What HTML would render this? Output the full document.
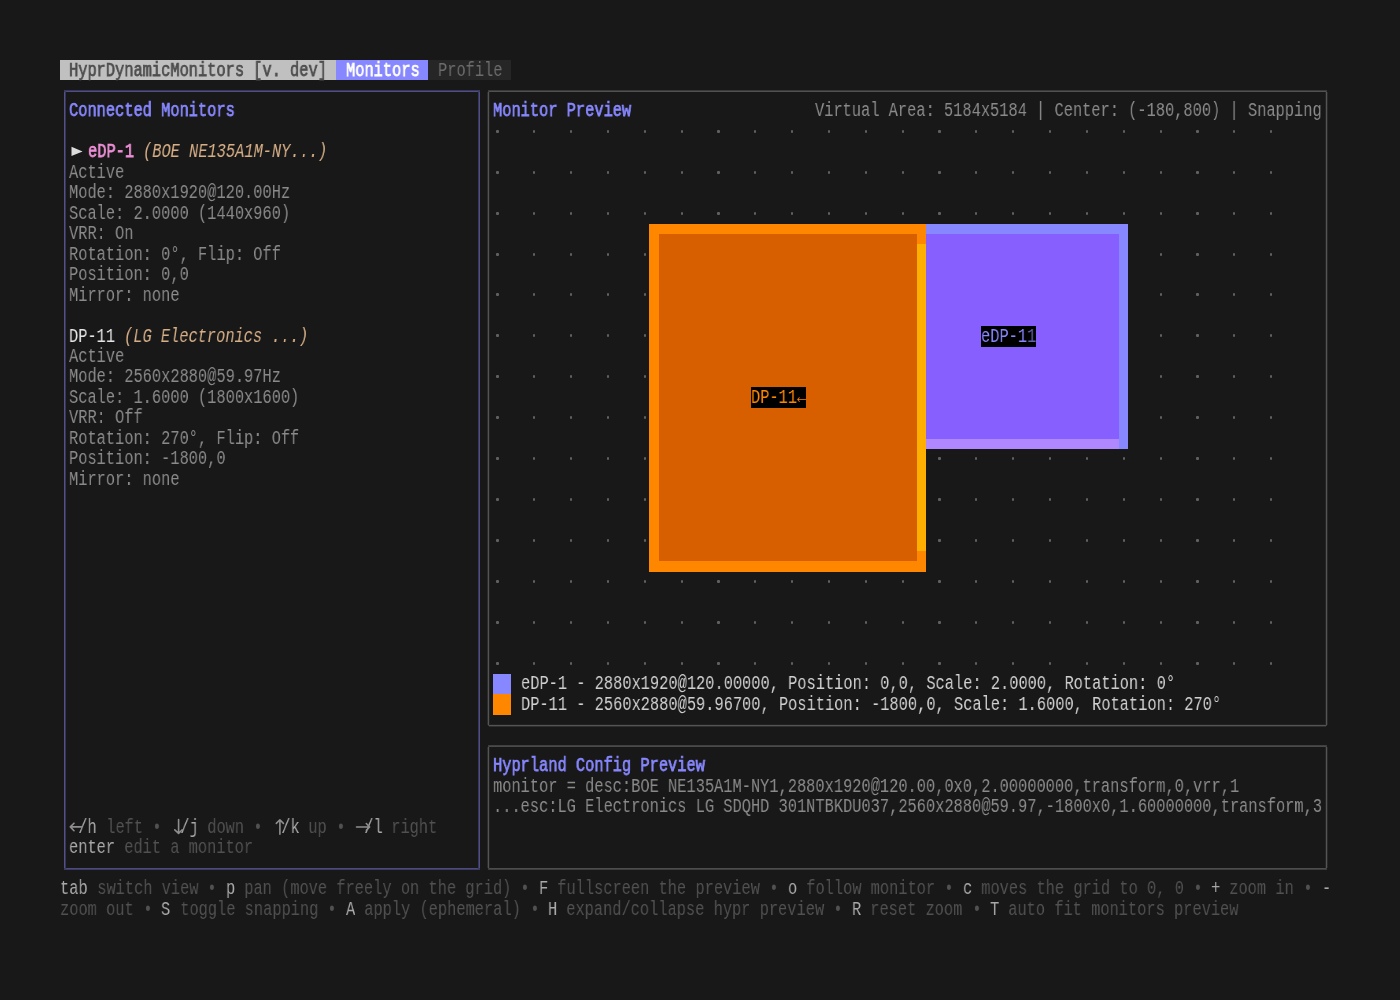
<!DOCTYPE html><html><head><meta charset="utf-8"><style>
html,body{margin:0;padding:0;width:1400px;height:1000px;overflow:hidden;background:#181818;}
body>div{position:absolute;}
.t{white-space:pre;font-family:"Liberation Mono",monospace;font-size:19.5px;line-height:20.465px;height:20.465px;transform-origin:0 0;transform:scaleX(0.78718);will-change:transform;}
.bx{border:1.5px solid;border-radius:2px;box-sizing:border-box;}
</style></head><body>
<div style="left:60.00px;top:60.00px;width:276.30px;height:20.47px;background:#c0c0c0;"></div>
<div style="left:336.30px;top:60.00px;width:92.10px;height:20.47px;background:#8787ff;"></div>
<div style="left:428.40px;top:60.00px;width:82.89px;height:20.47px;background:#262626;"></div>
<div class="t" style="left:69.21px;top:60.50px;color:#4e4e4e;-webkit-text-stroke:0.75px;">HyprDynamicMonitors [v. dev]</div>
<div class="t" style="left:345.51px;top:60.50px;color:#ffffff;-webkit-text-stroke:0.75px;">Monitors</div>
<div class="t" style="left:437.61px;top:60.50px;color:#6c6c6c;">Profile</div>
<div style="left:65.76px;top:90.00px;width:412.45px;height:1.00px;background:#393759;"></div>
<div style="left:65.76px;top:91.00px;width:412.45px;height:1.00px;background:#504e88;"></div>
<div style="left:65.76px;top:868.00px;width:412.45px;height:1.00px;background:#4c4a80;"></div>
<div style="left:65.76px;top:869.00px;width:412.45px;height:1.00px;background:#3c3b61;"></div>
<div style="left:64.00px;top:92.20px;width:1.00px;height:775.67px;background:#53518d;"></div>
<div style="left:65.00px;top:92.20px;width:1.00px;height:775.67px;background:#363554;"></div>
<div style="left:478.00px;top:92.20px;width:1.00px;height:775.67px;background:#383758;"></div>
<div style="left:479.00px;top:92.20px;width:1.00px;height:775.67px;background:#504e89;"></div>
<div style="left:64.01px;top:90.45px;width:1.50px;height:1.50px;background:#3b3a5f;"></div>
<div style="left:478.46px;top:90.45px;width:1.50px;height:1.50px;background:#3b3a5f;"></div>
<div style="left:64.01px;top:868.12px;width:1.50px;height:1.50px;background:#3b3a5f;"></div>
<div style="left:478.46px;top:868.12px;width:1.50px;height:1.50px;background:#3b3a5f;"></div>
<div style="left:489.42px;top:90.00px;width:836.11px;height:1.00px;background:#393939;"></div>
<div style="left:489.42px;top:91.00px;width:836.11px;height:1.00px;background:#515151;"></div>
<div style="left:489.42px;top:724.00px;width:836.11px;height:1.00px;background:#202020;"></div>
<div style="left:489.42px;top:725.00px;width:836.11px;height:1.00px;background:#545454;"></div>
<div style="left:489.42px;top:726.00px;width:836.11px;height:1.00px;background:#2e2e2e;"></div>
<div style="left:487.00px;top:92.20px;width:1.00px;height:632.41px;background:#2c2c2c;"></div>
<div style="left:488.00px;top:92.20px;width:1.00px;height:632.41px;background:#545454;"></div>
<div style="left:489.00px;top:92.20px;width:1.00px;height:632.41px;background:#222222;"></div>
<div style="left:1325.00px;top:92.20px;width:1.00px;height:632.41px;background:#252525;"></div>
<div style="left:1326.00px;top:92.20px;width:1.00px;height:632.41px;background:#545454;"></div>
<div style="left:1327.00px;top:92.20px;width:1.00px;height:632.41px;background:#292929;"></div>
<div style="left:487.67px;top:90.45px;width:1.50px;height:1.50px;background:#3c3c3c;"></div>
<div style="left:1325.78px;top:90.45px;width:1.50px;height:1.50px;background:#3c3c3c;"></div>
<div style="left:487.67px;top:724.86px;width:1.50px;height:1.50px;background:#3c3c3c;"></div>
<div style="left:1325.78px;top:724.86px;width:1.50px;height:1.50px;background:#3c3c3c;"></div>
<div style="left:489.42px;top:745.00px;width:836.11px;height:1.00px;background:#404040;"></div>
<div style="left:489.42px;top:746.00px;width:836.11px;height:1.00px;background:#4a4a4a;"></div>
<div style="left:489.42px;top:868.00px;width:836.11px;height:1.00px;background:#4d4d4d;"></div>
<div style="left:489.42px;top:869.00px;width:836.11px;height:1.00px;background:#3d3d3d;"></div>
<div style="left:487.00px;top:747.08px;width:1.00px;height:120.79px;background:#2c2c2c;"></div>
<div style="left:488.00px;top:747.08px;width:1.00px;height:120.79px;background:#545454;"></div>
<div style="left:489.00px;top:747.08px;width:1.00px;height:120.79px;background:#222222;"></div>
<div style="left:1325.00px;top:747.08px;width:1.00px;height:120.79px;background:#252525;"></div>
<div style="left:1326.00px;top:747.08px;width:1.00px;height:120.79px;background:#545454;"></div>
<div style="left:1327.00px;top:747.08px;width:1.00px;height:120.79px;background:#292929;"></div>
<div style="left:487.67px;top:745.33px;width:1.50px;height:1.50px;background:#3c3c3c;"></div>
<div style="left:1325.78px;top:745.33px;width:1.50px;height:1.50px;background:#3c3c3c;"></div>
<div style="left:487.67px;top:868.12px;width:1.50px;height:1.50px;background:#3c3c3c;"></div>
<div style="left:1325.78px;top:868.12px;width:1.50px;height:1.50px;background:#3c3c3c;"></div>
<div class="t" style="left:69.21px;top:101.43px;color:#8787ff;-webkit-text-stroke:0.75px;">Connected Monitors</div>
<div class="t" style="left:492.87px;top:101.43px;color:#8787ff;-webkit-text-stroke:0.75px;">Monitor Preview</div>
<div class="t" style="left:815.22px;top:101.43px;color:#8a8a8a;">Virtual Area: 5184x5184 | Center: (-180,800) | Snapping</div>
<svg style="position:absolute;left:0;top:0" width="100" height="200"><polygon points="71.5,146.8 82.6,151.4 71.5,156" fill="#dcdcdc"/></svg>
<div class="t" style="left:87.63px;top:142.36px;color:#ec8fd6;-webkit-text-stroke:0.75px;">eDP-1</div>
<div class="t" style="left:142.89px;top:142.36px;color:#d7af87;font-style:italic;">(BOE NE135A1M-NY...)</div>
<div class="t" style="left:69.21px;top:162.82px;color:#8a8a8a;">Active</div>
<div class="t" style="left:69.21px;top:183.29px;color:#8a8a8a;">Mode: 2880x1920@120.00Hz</div>
<div class="t" style="left:69.21px;top:203.75px;color:#8a8a8a;">Scale: 2.0000 (1440x960)</div>
<div class="t" style="left:69.21px;top:224.22px;color:#8a8a8a;">VRR: On</div>
<div class="t" style="left:69.21px;top:244.69px;color:#8a8a8a;">Rotation: 0°, Flip: Off</div>
<div class="t" style="left:69.21px;top:265.15px;color:#8a8a8a;">Position: 0,0</div>
<div class="t" style="left:69.21px;top:285.62px;color:#8a8a8a;">Mirror: none</div>
<div class="t" style="left:69.21px;top:326.55px;color:#e4e4e4;">DP-11</div>
<div class="t" style="left:124.47px;top:326.55px;color:#d7af87;font-style:italic;">(LG Electronics ...)</div>
<div class="t" style="left:69.21px;top:347.01px;color:#8a8a8a;">Active</div>
<div class="t" style="left:69.21px;top:367.48px;color:#8a8a8a;">Mode: 2560x2880@59.97Hz</div>
<div class="t" style="left:69.21px;top:387.94px;color:#8a8a8a;">Scale: 1.6000 (1800x1600)</div>
<div class="t" style="left:69.21px;top:408.40px;color:#8a8a8a;">VRR: Off</div>
<div class="t" style="left:69.21px;top:428.87px;color:#8a8a8a;">Rotation: 270°, Flip: Off</div>
<div class="t" style="left:69.21px;top:449.33px;color:#8a8a8a;">Position: -1800,0</div>
<div class="t" style="left:69.21px;top:469.80px;color:#8a8a8a;">Mirror: none</div>
<div class="t" style="left:69.21px;top:817.71px;color:#a8a8a8;"> /h</div>
<div class="t" style="left:96.84px;top:817.71px;color:#515151;"> left</div>
<div class="t" style="left:142.89px;top:817.71px;color:#515151;"> • </div>
<div class="t" style="left:170.52px;top:817.71px;color:#a8a8a8;"> /j</div>
<div class="t" style="left:198.15px;top:817.71px;color:#515151;"> down</div>
<div class="t" style="left:244.20px;top:817.71px;color:#515151;"> • </div>
<div class="t" style="left:271.83px;top:817.71px;color:#a8a8a8;"> /k</div>
<div class="t" style="left:299.46px;top:817.71px;color:#515151;"> up</div>
<div class="t" style="left:327.09px;top:817.71px;color:#515151;"> • </div>
<div class="t" style="left:354.72px;top:817.71px;color:#a8a8a8;"> /l</div>
<div class="t" style="left:382.35px;top:817.71px;color:#515151;"> right</div>
<svg style="position:absolute;left:0;top:0" width="400" height="900"><g fill="none" stroke="#8e8e8e" stroke-width="1.6" stroke-linecap="round" stroke-linejoin="round"><path d="M70.3,826.9 H81.5 M74,823.2 L70.3,826.9 L74,830.7"/><path d="M178.6,819.5 V833.3 M174.8,829.8 L178.6,833.4 L182.2,829.8"/><path d="M279.9,834.2 V819.8 M276.3,823.4 L279.9,819.8 L283.4,823.4"/><path d="M356.5,827 H367.5 M366.3,823.5 L369.6,827 L366.3,830.3"/></g></svg>
<div class="t" style="left:69.21px;top:838.17px;color:#a8a8a8;">enter</div>
<div class="t" style="left:115.26px;top:838.17px;color:#515151;"> edit a monitor</div>
<div style="left:496.38px;top:129.73px;width:2.20px;height:3.00px;background:#606060;border-radius:1px;"></div>
<div style="left:533.22px;top:129.73px;width:2.20px;height:3.00px;background:#606060;border-radius:1px;"></div>
<div style="left:570.06px;top:129.73px;width:2.20px;height:3.00px;background:#606060;border-radius:1px;"></div>
<div style="left:606.90px;top:129.73px;width:2.20px;height:3.00px;background:#606060;border-radius:1px;"></div>
<div style="left:643.74px;top:129.73px;width:2.20px;height:3.00px;background:#606060;border-radius:1px;"></div>
<div style="left:680.58px;top:129.73px;width:2.20px;height:3.00px;background:#606060;border-radius:1px;"></div>
<div style="left:717.42px;top:129.73px;width:2.20px;height:3.00px;background:#606060;border-radius:1px;"></div>
<div style="left:754.26px;top:129.73px;width:2.20px;height:3.00px;background:#606060;border-radius:1px;"></div>
<div style="left:791.10px;top:129.73px;width:2.20px;height:3.00px;background:#606060;border-radius:1px;"></div>
<div style="left:827.94px;top:129.73px;width:2.20px;height:3.00px;background:#606060;border-radius:1px;"></div>
<div style="left:864.78px;top:129.73px;width:2.20px;height:3.00px;background:#606060;border-radius:1px;"></div>
<div style="left:901.62px;top:129.73px;width:2.20px;height:3.00px;background:#606060;border-radius:1px;"></div>
<div style="left:938.46px;top:129.73px;width:2.20px;height:3.00px;background:#606060;border-radius:1px;"></div>
<div style="left:975.30px;top:129.73px;width:2.20px;height:3.00px;background:#606060;border-radius:1px;"></div>
<div style="left:1012.14px;top:129.73px;width:2.20px;height:3.00px;background:#606060;border-radius:1px;"></div>
<div style="left:1048.98px;top:129.73px;width:2.20px;height:3.00px;background:#606060;border-radius:1px;"></div>
<div style="left:1085.82px;top:129.73px;width:2.20px;height:3.00px;background:#606060;border-radius:1px;"></div>
<div style="left:1122.66px;top:129.73px;width:2.20px;height:3.00px;background:#606060;border-radius:1px;"></div>
<div style="left:1159.50px;top:129.73px;width:2.20px;height:3.00px;background:#606060;border-radius:1px;"></div>
<div style="left:1196.34px;top:129.73px;width:2.20px;height:3.00px;background:#606060;border-radius:1px;"></div>
<div style="left:1233.18px;top:129.73px;width:2.20px;height:3.00px;background:#606060;border-radius:1px;"></div>
<div style="left:1270.02px;top:129.73px;width:2.20px;height:3.00px;background:#606060;border-radius:1px;"></div>
<div style="left:496.38px;top:170.66px;width:2.20px;height:3.00px;background:#606060;border-radius:1px;"></div>
<div style="left:533.22px;top:170.66px;width:2.20px;height:3.00px;background:#606060;border-radius:1px;"></div>
<div style="left:570.06px;top:170.66px;width:2.20px;height:3.00px;background:#606060;border-radius:1px;"></div>
<div style="left:606.90px;top:170.66px;width:2.20px;height:3.00px;background:#606060;border-radius:1px;"></div>
<div style="left:643.74px;top:170.66px;width:2.20px;height:3.00px;background:#606060;border-radius:1px;"></div>
<div style="left:680.58px;top:170.66px;width:2.20px;height:3.00px;background:#606060;border-radius:1px;"></div>
<div style="left:717.42px;top:170.66px;width:2.20px;height:3.00px;background:#606060;border-radius:1px;"></div>
<div style="left:754.26px;top:170.66px;width:2.20px;height:3.00px;background:#606060;border-radius:1px;"></div>
<div style="left:791.10px;top:170.66px;width:2.20px;height:3.00px;background:#606060;border-radius:1px;"></div>
<div style="left:827.94px;top:170.66px;width:2.20px;height:3.00px;background:#606060;border-radius:1px;"></div>
<div style="left:864.78px;top:170.66px;width:2.20px;height:3.00px;background:#606060;border-radius:1px;"></div>
<div style="left:901.62px;top:170.66px;width:2.20px;height:3.00px;background:#606060;border-radius:1px;"></div>
<div style="left:938.46px;top:170.66px;width:2.20px;height:3.00px;background:#606060;border-radius:1px;"></div>
<div style="left:975.30px;top:170.66px;width:2.20px;height:3.00px;background:#606060;border-radius:1px;"></div>
<div style="left:1012.14px;top:170.66px;width:2.20px;height:3.00px;background:#606060;border-radius:1px;"></div>
<div style="left:1048.98px;top:170.66px;width:2.20px;height:3.00px;background:#606060;border-radius:1px;"></div>
<div style="left:1085.82px;top:170.66px;width:2.20px;height:3.00px;background:#606060;border-radius:1px;"></div>
<div style="left:1122.66px;top:170.66px;width:2.20px;height:3.00px;background:#606060;border-radius:1px;"></div>
<div style="left:1159.50px;top:170.66px;width:2.20px;height:3.00px;background:#606060;border-radius:1px;"></div>
<div style="left:1196.34px;top:170.66px;width:2.20px;height:3.00px;background:#606060;border-radius:1px;"></div>
<div style="left:1233.18px;top:170.66px;width:2.20px;height:3.00px;background:#606060;border-radius:1px;"></div>
<div style="left:1270.02px;top:170.66px;width:2.20px;height:3.00px;background:#606060;border-radius:1px;"></div>
<div style="left:496.38px;top:211.59px;width:2.20px;height:3.00px;background:#606060;border-radius:1px;"></div>
<div style="left:533.22px;top:211.59px;width:2.20px;height:3.00px;background:#606060;border-radius:1px;"></div>
<div style="left:570.06px;top:211.59px;width:2.20px;height:3.00px;background:#606060;border-radius:1px;"></div>
<div style="left:606.90px;top:211.59px;width:2.20px;height:3.00px;background:#606060;border-radius:1px;"></div>
<div style="left:643.74px;top:211.59px;width:2.20px;height:3.00px;background:#606060;border-radius:1px;"></div>
<div style="left:680.58px;top:211.59px;width:2.20px;height:3.00px;background:#606060;border-radius:1px;"></div>
<div style="left:717.42px;top:211.59px;width:2.20px;height:3.00px;background:#606060;border-radius:1px;"></div>
<div style="left:754.26px;top:211.59px;width:2.20px;height:3.00px;background:#606060;border-radius:1px;"></div>
<div style="left:791.10px;top:211.59px;width:2.20px;height:3.00px;background:#606060;border-radius:1px;"></div>
<div style="left:827.94px;top:211.59px;width:2.20px;height:3.00px;background:#606060;border-radius:1px;"></div>
<div style="left:864.78px;top:211.59px;width:2.20px;height:3.00px;background:#606060;border-radius:1px;"></div>
<div style="left:901.62px;top:211.59px;width:2.20px;height:3.00px;background:#606060;border-radius:1px;"></div>
<div style="left:938.46px;top:211.59px;width:2.20px;height:3.00px;background:#606060;border-radius:1px;"></div>
<div style="left:975.30px;top:211.59px;width:2.20px;height:3.00px;background:#606060;border-radius:1px;"></div>
<div style="left:1012.14px;top:211.59px;width:2.20px;height:3.00px;background:#606060;border-radius:1px;"></div>
<div style="left:1048.98px;top:211.59px;width:2.20px;height:3.00px;background:#606060;border-radius:1px;"></div>
<div style="left:1085.82px;top:211.59px;width:2.20px;height:3.00px;background:#606060;border-radius:1px;"></div>
<div style="left:1122.66px;top:211.59px;width:2.20px;height:3.00px;background:#606060;border-radius:1px;"></div>
<div style="left:1159.50px;top:211.59px;width:2.20px;height:3.00px;background:#606060;border-radius:1px;"></div>
<div style="left:1196.34px;top:211.59px;width:2.20px;height:3.00px;background:#606060;border-radius:1px;"></div>
<div style="left:1233.18px;top:211.59px;width:2.20px;height:3.00px;background:#606060;border-radius:1px;"></div>
<div style="left:1270.02px;top:211.59px;width:2.20px;height:3.00px;background:#606060;border-radius:1px;"></div>
<div style="left:496.38px;top:252.52px;width:2.20px;height:3.00px;background:#606060;border-radius:1px;"></div>
<div style="left:533.22px;top:252.52px;width:2.20px;height:3.00px;background:#606060;border-radius:1px;"></div>
<div style="left:570.06px;top:252.52px;width:2.20px;height:3.00px;background:#606060;border-radius:1px;"></div>
<div style="left:606.90px;top:252.52px;width:2.20px;height:3.00px;background:#606060;border-radius:1px;"></div>
<div style="left:643.74px;top:252.52px;width:2.20px;height:3.00px;background:#606060;border-radius:1px;"></div>
<div style="left:1159.50px;top:252.52px;width:2.20px;height:3.00px;background:#606060;border-radius:1px;"></div>
<div style="left:1196.34px;top:252.52px;width:2.20px;height:3.00px;background:#606060;border-radius:1px;"></div>
<div style="left:1233.18px;top:252.52px;width:2.20px;height:3.00px;background:#606060;border-radius:1px;"></div>
<div style="left:1270.02px;top:252.52px;width:2.20px;height:3.00px;background:#606060;border-radius:1px;"></div>
<div style="left:496.38px;top:293.45px;width:2.20px;height:3.00px;background:#606060;border-radius:1px;"></div>
<div style="left:533.22px;top:293.45px;width:2.20px;height:3.00px;background:#606060;border-radius:1px;"></div>
<div style="left:570.06px;top:293.45px;width:2.20px;height:3.00px;background:#606060;border-radius:1px;"></div>
<div style="left:606.90px;top:293.45px;width:2.20px;height:3.00px;background:#606060;border-radius:1px;"></div>
<div style="left:643.74px;top:293.45px;width:2.20px;height:3.00px;background:#606060;border-radius:1px;"></div>
<div style="left:1159.50px;top:293.45px;width:2.20px;height:3.00px;background:#606060;border-radius:1px;"></div>
<div style="left:1196.34px;top:293.45px;width:2.20px;height:3.00px;background:#606060;border-radius:1px;"></div>
<div style="left:1233.18px;top:293.45px;width:2.20px;height:3.00px;background:#606060;border-radius:1px;"></div>
<div style="left:1270.02px;top:293.45px;width:2.20px;height:3.00px;background:#606060;border-radius:1px;"></div>
<div style="left:496.38px;top:334.38px;width:2.20px;height:3.00px;background:#606060;border-radius:1px;"></div>
<div style="left:533.22px;top:334.38px;width:2.20px;height:3.00px;background:#606060;border-radius:1px;"></div>
<div style="left:570.06px;top:334.38px;width:2.20px;height:3.00px;background:#606060;border-radius:1px;"></div>
<div style="left:606.90px;top:334.38px;width:2.20px;height:3.00px;background:#606060;border-radius:1px;"></div>
<div style="left:643.74px;top:334.38px;width:2.20px;height:3.00px;background:#606060;border-radius:1px;"></div>
<div style="left:1159.50px;top:334.38px;width:2.20px;height:3.00px;background:#606060;border-radius:1px;"></div>
<div style="left:1196.34px;top:334.38px;width:2.20px;height:3.00px;background:#606060;border-radius:1px;"></div>
<div style="left:1233.18px;top:334.38px;width:2.20px;height:3.00px;background:#606060;border-radius:1px;"></div>
<div style="left:1270.02px;top:334.38px;width:2.20px;height:3.00px;background:#606060;border-radius:1px;"></div>
<div style="left:496.38px;top:375.31px;width:2.20px;height:3.00px;background:#606060;border-radius:1px;"></div>
<div style="left:533.22px;top:375.31px;width:2.20px;height:3.00px;background:#606060;border-radius:1px;"></div>
<div style="left:570.06px;top:375.31px;width:2.20px;height:3.00px;background:#606060;border-radius:1px;"></div>
<div style="left:606.90px;top:375.31px;width:2.20px;height:3.00px;background:#606060;border-radius:1px;"></div>
<div style="left:643.74px;top:375.31px;width:2.20px;height:3.00px;background:#606060;border-radius:1px;"></div>
<div style="left:1159.50px;top:375.31px;width:2.20px;height:3.00px;background:#606060;border-radius:1px;"></div>
<div style="left:1196.34px;top:375.31px;width:2.20px;height:3.00px;background:#606060;border-radius:1px;"></div>
<div style="left:1233.18px;top:375.31px;width:2.20px;height:3.00px;background:#606060;border-radius:1px;"></div>
<div style="left:1270.02px;top:375.31px;width:2.20px;height:3.00px;background:#606060;border-radius:1px;"></div>
<div style="left:496.38px;top:416.24px;width:2.20px;height:3.00px;background:#606060;border-radius:1px;"></div>
<div style="left:533.22px;top:416.24px;width:2.20px;height:3.00px;background:#606060;border-radius:1px;"></div>
<div style="left:570.06px;top:416.24px;width:2.20px;height:3.00px;background:#606060;border-radius:1px;"></div>
<div style="left:606.90px;top:416.24px;width:2.20px;height:3.00px;background:#606060;border-radius:1px;"></div>
<div style="left:643.74px;top:416.24px;width:2.20px;height:3.00px;background:#606060;border-radius:1px;"></div>
<div style="left:1159.50px;top:416.24px;width:2.20px;height:3.00px;background:#606060;border-radius:1px;"></div>
<div style="left:1196.34px;top:416.24px;width:2.20px;height:3.00px;background:#606060;border-radius:1px;"></div>
<div style="left:1233.18px;top:416.24px;width:2.20px;height:3.00px;background:#606060;border-radius:1px;"></div>
<div style="left:1270.02px;top:416.24px;width:2.20px;height:3.00px;background:#606060;border-radius:1px;"></div>
<div style="left:496.38px;top:457.17px;width:2.20px;height:3.00px;background:#606060;border-radius:1px;"></div>
<div style="left:533.22px;top:457.17px;width:2.20px;height:3.00px;background:#606060;border-radius:1px;"></div>
<div style="left:570.06px;top:457.17px;width:2.20px;height:3.00px;background:#606060;border-radius:1px;"></div>
<div style="left:606.90px;top:457.17px;width:2.20px;height:3.00px;background:#606060;border-radius:1px;"></div>
<div style="left:643.74px;top:457.17px;width:2.20px;height:3.00px;background:#606060;border-radius:1px;"></div>
<div style="left:938.46px;top:457.17px;width:2.20px;height:3.00px;background:#606060;border-radius:1px;"></div>
<div style="left:975.30px;top:457.17px;width:2.20px;height:3.00px;background:#606060;border-radius:1px;"></div>
<div style="left:1012.14px;top:457.17px;width:2.20px;height:3.00px;background:#606060;border-radius:1px;"></div>
<div style="left:1048.98px;top:457.17px;width:2.20px;height:3.00px;background:#606060;border-radius:1px;"></div>
<div style="left:1085.82px;top:457.17px;width:2.20px;height:3.00px;background:#606060;border-radius:1px;"></div>
<div style="left:1122.66px;top:457.17px;width:2.20px;height:3.00px;background:#606060;border-radius:1px;"></div>
<div style="left:1159.50px;top:457.17px;width:2.20px;height:3.00px;background:#606060;border-radius:1px;"></div>
<div style="left:1196.34px;top:457.17px;width:2.20px;height:3.00px;background:#606060;border-radius:1px;"></div>
<div style="left:1233.18px;top:457.17px;width:2.20px;height:3.00px;background:#606060;border-radius:1px;"></div>
<div style="left:1270.02px;top:457.17px;width:2.20px;height:3.00px;background:#606060;border-radius:1px;"></div>
<div style="left:496.38px;top:498.10px;width:2.20px;height:3.00px;background:#606060;border-radius:1px;"></div>
<div style="left:533.22px;top:498.10px;width:2.20px;height:3.00px;background:#606060;border-radius:1px;"></div>
<div style="left:570.06px;top:498.10px;width:2.20px;height:3.00px;background:#606060;border-radius:1px;"></div>
<div style="left:606.90px;top:498.10px;width:2.20px;height:3.00px;background:#606060;border-radius:1px;"></div>
<div style="left:643.74px;top:498.10px;width:2.20px;height:3.00px;background:#606060;border-radius:1px;"></div>
<div style="left:938.46px;top:498.10px;width:2.20px;height:3.00px;background:#606060;border-radius:1px;"></div>
<div style="left:975.30px;top:498.10px;width:2.20px;height:3.00px;background:#606060;border-radius:1px;"></div>
<div style="left:1012.14px;top:498.10px;width:2.20px;height:3.00px;background:#606060;border-radius:1px;"></div>
<div style="left:1048.98px;top:498.10px;width:2.20px;height:3.00px;background:#606060;border-radius:1px;"></div>
<div style="left:1085.82px;top:498.10px;width:2.20px;height:3.00px;background:#606060;border-radius:1px;"></div>
<div style="left:1122.66px;top:498.10px;width:2.20px;height:3.00px;background:#606060;border-radius:1px;"></div>
<div style="left:1159.50px;top:498.10px;width:2.20px;height:3.00px;background:#606060;border-radius:1px;"></div>
<div style="left:1196.34px;top:498.10px;width:2.20px;height:3.00px;background:#606060;border-radius:1px;"></div>
<div style="left:1233.18px;top:498.10px;width:2.20px;height:3.00px;background:#606060;border-radius:1px;"></div>
<div style="left:1270.02px;top:498.10px;width:2.20px;height:3.00px;background:#606060;border-radius:1px;"></div>
<div style="left:496.38px;top:539.03px;width:2.20px;height:3.00px;background:#606060;border-radius:1px;"></div>
<div style="left:533.22px;top:539.03px;width:2.20px;height:3.00px;background:#606060;border-radius:1px;"></div>
<div style="left:570.06px;top:539.03px;width:2.20px;height:3.00px;background:#606060;border-radius:1px;"></div>
<div style="left:606.90px;top:539.03px;width:2.20px;height:3.00px;background:#606060;border-radius:1px;"></div>
<div style="left:643.74px;top:539.03px;width:2.20px;height:3.00px;background:#606060;border-radius:1px;"></div>
<div style="left:938.46px;top:539.03px;width:2.20px;height:3.00px;background:#606060;border-radius:1px;"></div>
<div style="left:975.30px;top:539.03px;width:2.20px;height:3.00px;background:#606060;border-radius:1px;"></div>
<div style="left:1012.14px;top:539.03px;width:2.20px;height:3.00px;background:#606060;border-radius:1px;"></div>
<div style="left:1048.98px;top:539.03px;width:2.20px;height:3.00px;background:#606060;border-radius:1px;"></div>
<div style="left:1085.82px;top:539.03px;width:2.20px;height:3.00px;background:#606060;border-radius:1px;"></div>
<div style="left:1122.66px;top:539.03px;width:2.20px;height:3.00px;background:#606060;border-radius:1px;"></div>
<div style="left:1159.50px;top:539.03px;width:2.20px;height:3.00px;background:#606060;border-radius:1px;"></div>
<div style="left:1196.34px;top:539.03px;width:2.20px;height:3.00px;background:#606060;border-radius:1px;"></div>
<div style="left:1233.18px;top:539.03px;width:2.20px;height:3.00px;background:#606060;border-radius:1px;"></div>
<div style="left:1270.02px;top:539.03px;width:2.20px;height:3.00px;background:#606060;border-radius:1px;"></div>
<div style="left:496.38px;top:579.96px;width:2.20px;height:3.00px;background:#606060;border-radius:1px;"></div>
<div style="left:533.22px;top:579.96px;width:2.20px;height:3.00px;background:#606060;border-radius:1px;"></div>
<div style="left:570.06px;top:579.96px;width:2.20px;height:3.00px;background:#606060;border-radius:1px;"></div>
<div style="left:606.90px;top:579.96px;width:2.20px;height:3.00px;background:#606060;border-radius:1px;"></div>
<div style="left:643.74px;top:579.96px;width:2.20px;height:3.00px;background:#606060;border-radius:1px;"></div>
<div style="left:680.58px;top:579.96px;width:2.20px;height:3.00px;background:#606060;border-radius:1px;"></div>
<div style="left:717.42px;top:579.96px;width:2.20px;height:3.00px;background:#606060;border-radius:1px;"></div>
<div style="left:754.26px;top:579.96px;width:2.20px;height:3.00px;background:#606060;border-radius:1px;"></div>
<div style="left:791.10px;top:579.96px;width:2.20px;height:3.00px;background:#606060;border-radius:1px;"></div>
<div style="left:827.94px;top:579.96px;width:2.20px;height:3.00px;background:#606060;border-radius:1px;"></div>
<div style="left:864.78px;top:579.96px;width:2.20px;height:3.00px;background:#606060;border-radius:1px;"></div>
<div style="left:901.62px;top:579.96px;width:2.20px;height:3.00px;background:#606060;border-radius:1px;"></div>
<div style="left:938.46px;top:579.96px;width:2.20px;height:3.00px;background:#606060;border-radius:1px;"></div>
<div style="left:975.30px;top:579.96px;width:2.20px;height:3.00px;background:#606060;border-radius:1px;"></div>
<div style="left:1012.14px;top:579.96px;width:2.20px;height:3.00px;background:#606060;border-radius:1px;"></div>
<div style="left:1048.98px;top:579.96px;width:2.20px;height:3.00px;background:#606060;border-radius:1px;"></div>
<div style="left:1085.82px;top:579.96px;width:2.20px;height:3.00px;background:#606060;border-radius:1px;"></div>
<div style="left:1122.66px;top:579.96px;width:2.20px;height:3.00px;background:#606060;border-radius:1px;"></div>
<div style="left:1159.50px;top:579.96px;width:2.20px;height:3.00px;background:#606060;border-radius:1px;"></div>
<div style="left:1196.34px;top:579.96px;width:2.20px;height:3.00px;background:#606060;border-radius:1px;"></div>
<div style="left:1233.18px;top:579.96px;width:2.20px;height:3.00px;background:#606060;border-radius:1px;"></div>
<div style="left:1270.02px;top:579.96px;width:2.20px;height:3.00px;background:#606060;border-radius:1px;"></div>
<div style="left:496.38px;top:620.89px;width:2.20px;height:3.00px;background:#606060;border-radius:1px;"></div>
<div style="left:533.22px;top:620.89px;width:2.20px;height:3.00px;background:#606060;border-radius:1px;"></div>
<div style="left:570.06px;top:620.89px;width:2.20px;height:3.00px;background:#606060;border-radius:1px;"></div>
<div style="left:606.90px;top:620.89px;width:2.20px;height:3.00px;background:#606060;border-radius:1px;"></div>
<div style="left:643.74px;top:620.89px;width:2.20px;height:3.00px;background:#606060;border-radius:1px;"></div>
<div style="left:680.58px;top:620.89px;width:2.20px;height:3.00px;background:#606060;border-radius:1px;"></div>
<div style="left:717.42px;top:620.89px;width:2.20px;height:3.00px;background:#606060;border-radius:1px;"></div>
<div style="left:754.26px;top:620.89px;width:2.20px;height:3.00px;background:#606060;border-radius:1px;"></div>
<div style="left:791.10px;top:620.89px;width:2.20px;height:3.00px;background:#606060;border-radius:1px;"></div>
<div style="left:827.94px;top:620.89px;width:2.20px;height:3.00px;background:#606060;border-radius:1px;"></div>
<div style="left:864.78px;top:620.89px;width:2.20px;height:3.00px;background:#606060;border-radius:1px;"></div>
<div style="left:901.62px;top:620.89px;width:2.20px;height:3.00px;background:#606060;border-radius:1px;"></div>
<div style="left:938.46px;top:620.89px;width:2.20px;height:3.00px;background:#606060;border-radius:1px;"></div>
<div style="left:975.30px;top:620.89px;width:2.20px;height:3.00px;background:#606060;border-radius:1px;"></div>
<div style="left:1012.14px;top:620.89px;width:2.20px;height:3.00px;background:#606060;border-radius:1px;"></div>
<div style="left:1048.98px;top:620.89px;width:2.20px;height:3.00px;background:#606060;border-radius:1px;"></div>
<div style="left:1085.82px;top:620.89px;width:2.20px;height:3.00px;background:#606060;border-radius:1px;"></div>
<div style="left:1122.66px;top:620.89px;width:2.20px;height:3.00px;background:#606060;border-radius:1px;"></div>
<div style="left:1159.50px;top:620.89px;width:2.20px;height:3.00px;background:#606060;border-radius:1px;"></div>
<div style="left:1196.34px;top:620.89px;width:2.20px;height:3.00px;background:#606060;border-radius:1px;"></div>
<div style="left:1233.18px;top:620.89px;width:2.20px;height:3.00px;background:#606060;border-radius:1px;"></div>
<div style="left:1270.02px;top:620.89px;width:2.20px;height:3.00px;background:#606060;border-radius:1px;"></div>
<div style="left:496.38px;top:661.82px;width:2.20px;height:3.00px;background:#606060;border-radius:1px;"></div>
<div style="left:533.22px;top:661.82px;width:2.20px;height:3.00px;background:#606060;border-radius:1px;"></div>
<div style="left:570.06px;top:661.82px;width:2.20px;height:3.00px;background:#606060;border-radius:1px;"></div>
<div style="left:606.90px;top:661.82px;width:2.20px;height:3.00px;background:#606060;border-radius:1px;"></div>
<div style="left:643.74px;top:661.82px;width:2.20px;height:3.00px;background:#606060;border-radius:1px;"></div>
<div style="left:680.58px;top:661.82px;width:2.20px;height:3.00px;background:#606060;border-radius:1px;"></div>
<div style="left:717.42px;top:661.82px;width:2.20px;height:3.00px;background:#606060;border-radius:1px;"></div>
<div style="left:754.26px;top:661.82px;width:2.20px;height:3.00px;background:#606060;border-radius:1px;"></div>
<div style="left:791.10px;top:661.82px;width:2.20px;height:3.00px;background:#606060;border-radius:1px;"></div>
<div style="left:827.94px;top:661.82px;width:2.20px;height:3.00px;background:#606060;border-radius:1px;"></div>
<div style="left:864.78px;top:661.82px;width:2.20px;height:3.00px;background:#606060;border-radius:1px;"></div>
<div style="left:901.62px;top:661.82px;width:2.20px;height:3.00px;background:#606060;border-radius:1px;"></div>
<div style="left:938.46px;top:661.82px;width:2.20px;height:3.00px;background:#606060;border-radius:1px;"></div>
<div style="left:975.30px;top:661.82px;width:2.20px;height:3.00px;background:#606060;border-radius:1px;"></div>
<div style="left:1012.14px;top:661.82px;width:2.20px;height:3.00px;background:#606060;border-radius:1px;"></div>
<div style="left:1048.98px;top:661.82px;width:2.20px;height:3.00px;background:#606060;border-radius:1px;"></div>
<div style="left:1085.82px;top:661.82px;width:2.20px;height:3.00px;background:#606060;border-radius:1px;"></div>
<div style="left:1122.66px;top:661.82px;width:2.20px;height:3.00px;background:#606060;border-radius:1px;"></div>
<div style="left:1159.50px;top:661.82px;width:2.20px;height:3.00px;background:#606060;border-radius:1px;"></div>
<div style="left:1196.34px;top:661.82px;width:2.20px;height:3.00px;background:#606060;border-radius:1px;"></div>
<div style="left:1233.18px;top:661.82px;width:2.20px;height:3.00px;background:#606060;border-radius:1px;"></div>
<div style="left:1270.02px;top:661.82px;width:2.20px;height:3.00px;background:#606060;border-radius:1px;"></div>
<div style="left:649.44px;top:223.72px;width:276.30px;height:347.90px;background:#d75f00;"></div>
<div style="left:649.44px;top:223.72px;width:276.30px;height:10.23px;background:#ff8700;"></div>
<div style="left:649.44px;top:561.39px;width:276.30px;height:10.23px;background:#ff8700;"></div>
<div style="left:649.44px;top:223.72px;width:9.21px;height:347.90px;background:#ff8700;"></div>
<div style="left:916.53px;top:223.72px;width:9.21px;height:347.90px;background:#ff8700;"></div>
<div style="left:916.53px;top:244.19px;width:9.21px;height:306.97px;background:#ffaf00;"></div>
<div style="left:925.74px;top:223.72px;width:202.62px;height:225.11px;background:#875fff;"></div>
<div style="left:925.74px;top:223.72px;width:202.62px;height:10.23px;background:#8787ff;"></div>
<div style="left:925.74px;top:438.60px;width:193.41px;height:10.23px;background:#af87ff;"></div>
<div style="left:1119.15px;top:223.72px;width:9.21px;height:225.11px;background:#8787ff;"></div>
<div style="left:750.75px;top:387.44px;width:55.26px;height:20.46px;background:#000000;"></div>
<div class="t" style="left:750.75px;top:387.94px;color:#ff8700;">DP-11←</div>
<div style="left:981.00px;top:326.05px;width:55.26px;height:20.46px;background:#000000;"></div>
<div class="t" style="left:981.00px;top:326.55px;color:#8787ff;">eDP-1</div>
<div class="t" style="left:1027.05px;top:326.55px;color:#6262b0;">1</div>
<div style="left:492.87px;top:673.95px;width:18.42px;height:20.46px;background:#8787ff;"></div>
<div style="left:492.87px;top:694.41px;width:18.42px;height:20.47px;background:#ff8700;"></div>
<div class="t" style="left:520.50px;top:674.45px;color:#d0d0d0;">eDP-1 - 2880x1920@120.00000, Position: 0,0, Scale: 2.0000, Rotation: 0°</div>
<div class="t" style="left:520.50px;top:694.91px;color:#d0d0d0;">DP-11 - 2560x2880@59.96700, Position: -1800,0, Scale: 1.6000, Rotation: 270°</div>
<div class="t" style="left:492.87px;top:756.31px;color:#8787ff;-webkit-text-stroke:0.75px;">Hyprland Config Preview</div>
<div class="t" style="left:492.87px;top:776.77px;color:#8a8a8a;">monitor = desc:BOE NE135A1M-NY1,2880x1920@120.00,0x0,2.00000000,transform,0,vrr,1</div>
<div class="t" style="left:492.87px;top:797.24px;color:#8a8a8a;">...esc:LG Electronics LG SDQHD 301NTBKDU037,2560x2880@59.97,-1800x0,1.60000000,transform,3</div>
<div class="t" style="left:60.00px;top:879.10px;color:#a8a8a8;">tab</div>
<div class="t" style="left:87.63px;top:879.10px;color:#515151;"> switch view</div>
<div class="t" style="left:198.15px;top:879.10px;color:#515151;"> • </div>
<div class="t" style="left:225.78px;top:879.10px;color:#a8a8a8;">p</div>
<div class="t" style="left:234.99px;top:879.10px;color:#515151;"> pan (move freely on the grid)</div>
<div class="t" style="left:511.29px;top:879.10px;color:#515151;"> • </div>
<div class="t" style="left:538.92px;top:879.10px;color:#a8a8a8;">F</div>
<div class="t" style="left:548.13px;top:879.10px;color:#515151;"> fullscreen the preview</div>
<div class="t" style="left:759.96px;top:879.10px;color:#515151;"> • </div>
<div class="t" style="left:787.59px;top:879.10px;color:#a8a8a8;">o</div>
<div class="t" style="left:796.80px;top:879.10px;color:#515151;"> follow monitor</div>
<div class="t" style="left:934.95px;top:879.10px;color:#515151;"> • </div>
<div class="t" style="left:962.58px;top:879.10px;color:#a8a8a8;">c</div>
<div class="t" style="left:971.79px;top:879.10px;color:#515151;"> moves the grid to 0, 0</div>
<div class="t" style="left:1183.62px;top:879.10px;color:#515151;"> • </div>
<div class="t" style="left:1211.25px;top:879.10px;color:#a8a8a8;">+</div>
<div class="t" style="left:1220.46px;top:879.10px;color:#515151;"> zoom in</div>
<div class="t" style="left:1294.14px;top:879.10px;color:#515151;"> • </div>
<div class="t" style="left:1321.77px;top:879.10px;color:#a8a8a8;">-</div>
<div class="t" style="left:60.00px;top:899.56px;color:#515151;">zoom out</div>
<div class="t" style="left:133.68px;top:899.56px;color:#515151;"> • </div>
<div class="t" style="left:161.31px;top:899.56px;color:#a8a8a8;">S</div>
<div class="t" style="left:170.52px;top:899.56px;color:#515151;"> toggle snapping</div>
<div class="t" style="left:317.88px;top:899.56px;color:#515151;"> • </div>
<div class="t" style="left:345.51px;top:899.56px;color:#a8a8a8;">A</div>
<div class="t" style="left:354.72px;top:899.56px;color:#515151;"> apply (ephemeral)</div>
<div class="t" style="left:520.50px;top:899.56px;color:#515151;"> • </div>
<div class="t" style="left:548.13px;top:899.56px;color:#a8a8a8;">H</div>
<div class="t" style="left:557.34px;top:899.56px;color:#515151;"> expand/collapse hypr preview</div>
<div class="t" style="left:824.43px;top:899.56px;color:#515151;"> • </div>
<div class="t" style="left:852.06px;top:899.56px;color:#a8a8a8;">R</div>
<div class="t" style="left:861.27px;top:899.56px;color:#515151;"> reset zoom</div>
<div class="t" style="left:962.58px;top:899.56px;color:#515151;"> • </div>
<div class="t" style="left:990.21px;top:899.56px;color:#a8a8a8;">T</div>
<div class="t" style="left:999.42px;top:899.56px;color:#515151;"> auto fit monitors preview</div>
</body></html>
